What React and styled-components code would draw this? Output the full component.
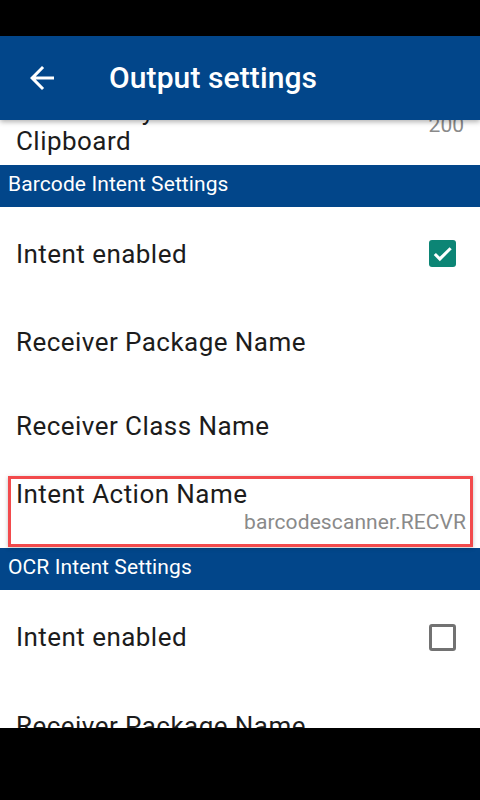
import React from 'react'
import styled, { createGlobalStyle } from 'styled-components'

const GlobalStyle = createGlobalStyle`
    html, body {
        margin: 0;
        padding: 0;
        background: #000;
    }
    body {
        font-family: Roboto, "Noto Sans", sans-serif;
    }
`

const Screen = styled.div`
    width: 480px;
    height: 800px;
    display: flex;
    flex-direction: column;
    background: #000;
    overflow: hidden;
`

const StatusBar = styled.div`
    height: 36px;
    flex: none;
    background: #000;
`

const Toolbar = styled.div`
    height: 84px;
    flex: none;
    background: #02468a;
    display: flex;
    align-items: center;
    padding-left: 24px;
    gap: 49px;
    position: relative;
    z-index: 2;
    box-shadow: 0 2px 5px rgba(0, 0, 0, 0.3);

    svg {
        flex: none;
    }

    h1 {
        margin: 0 0 2px;
        color: #fff;
        font-size: 30px;
        font-weight: 500;
        letter-spacing: 0.1px;
    }
`

const BackIcon = () => (
    <svg width="36" height="36" viewBox="0 0 24 24">
        <path d="M20 11H7.83l5.59-5.59L12 4l-8 8 8 8 1.41-1.41L7.83 13H20v-2z" fill="#fff" />
    </svg>
)

const Viewport = styled.div`
    height: 608px;
    flex: none;
    background: #fff;
    overflow: hidden;
`

const List = styled.div`
    display: flex;
    flex-direction: column;
    margin-top: ${p => -p.$scroll}px;
`

const Category = styled.div`
    height: 42px;
    background: #02468a;
    color: #fff;
    font-size: 21px;
    letter-spacing: 0.1px;
    display: flex;
    align-items: center;
    padding-left: 8px;
    padding-bottom: 5px;
    box-sizing: border-box;
`

const Row = styled.div`
    position: relative;
    height: ${p => p.$h || 84}px;
    display: flex;
    align-items: ${p => (p.$stacked ? 'stretch' : 'center')};
    justify-content: space-between;
    padding: 0 24px 0 16px;
    box-sizing: border-box;
`

const Texts = styled.div`
    display: flex;
    flex-direction: column;
    flex: 1;
    padding-top: ${p => p.$pt || 0}px;
`

const Title = styled.div`
    font-size: 26px;
    line-height: 30px;
    letter-spacing: 0.45px;
    color: #1c1c1c;
`

const Summary = styled.div`
    font-size: 21px;
    line-height: 26px;
    letter-spacing: 0.1px;
    color: #8a8a8a;
    text-align: right;
    margin-right: -10px;
`

const SideValue = styled.div`
    font-size: 21px;
    line-height: 25px;
    color: #8a8a8a;
    align-self: flex-start;
    margin-top: ${p => p.$mt || 0}px;
    margin-right: -8px;
`

const Check = styled.div`
    width: 27px;
    height: 27px;
    box-sizing: border-box;
    border-radius: 3px;
    display: flex;
    align-items: center;
    justify-content: center;
    background: ${p => (p.$on ? '#0c8575' : 'transparent')};
    border: ${p => (p.$on ? 'none' : '3px solid #727272')};
`

const Highlight = styled.div`
    position: absolute;
    top: 8px;
    left: 8px;
    right: 7px;
    bottom: 1px;
    border: 3px solid #f24a4c;
    box-shadow: 0 1px 4px rgba(0, 0, 0, 0.25);
    pointer-events: none;
`

const BottomBar = styled.div`
    flex: 1;
    background: #000;
`

const Checkbox = ({ on }) => (
    <Check $on={on}>
        {on && (
            <svg width="23" height="23" viewBox="0 0 24 24">
                <path d="M4 12.5l5.2 5.2L20.5 6.5" fill="none" stroke="#fff" strokeWidth="3.2" />
            </svg>
        )}
    </Check>
)

const App = () => {
    return (
        <Screen>
            <GlobalStyle />
            <StatusBar />
            <Toolbar>
                <BackIcon />
                <h1>Output settings</h1>
            </Toolbar>
            <Viewport>
                <List $scroll={39}>
                    <Row $h={84} $stacked>
                        <Texts $pt={15}>
                            <Title>Paste delay</Title>
                            <Title>Clipboard</Title>
                        </Texts>
                        <SideValue $mt={32}>200</SideValue>
                    </Row>
                    <Category>Barcode Intent Settings</Category>
                    <Row $h={93}>
                        <Title>Intent enabled</Title>
                        <Checkbox on />
                    </Row>
                    <Row>
                        <Title>Receiver Package Name</Title>
                    </Row>
                    <Row>
                        <Title>Receiver Class Name</Title>
                    </Row>
                    <Row $h={80} $stacked>
                        <Texts $pt={11}>
                            <Title>Intent Action Name</Title>
                            <Summary>barcodescanner.RECVR</Summary>
                        </Texts>
                        <Highlight />
                    </Row>
                    <Category>OCR Intent Settings</Category>
                    <Row $h={94}>
                        <Title>Intent enabled</Title>
                        <Checkbox />
                    </Row>
                    <Row>
                        <Title>Receiver Package Name</Title>
                    </Row>
                </List>
            </Viewport>
            <BottomBar />
        </Screen>
    )
}

export default App
